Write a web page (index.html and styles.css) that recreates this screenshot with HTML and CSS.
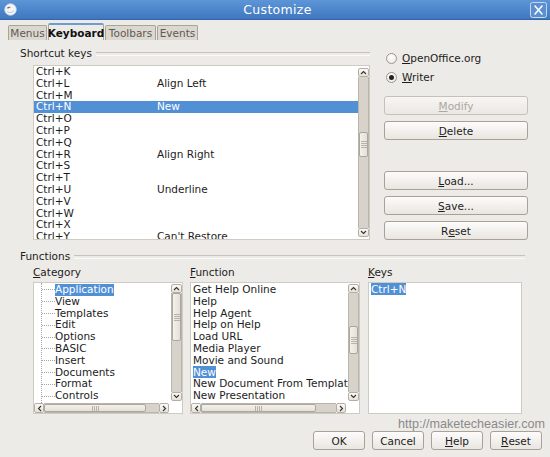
FILE: index.html
```html
<!DOCTYPE html>
<html>
<head>
<meta charset="utf-8">
<title>Customize</title>
<link rel="stylesheet" href="styles.css">
</head>
<body>
<div class="window">
  <div class="titlebar">
    <span class="app-icon">
      <svg width="13" height="13" viewBox="0 0 13 13"><circle cx="6.5" cy="6.5" r="5.8" fill="#f4f6f8" stroke="#c9d3de" stroke-width="0.8"/><path d="M2.6 5.2 C4 3.6 6.4 3.4 8 4.4 C6.6 4.2 5.2 4.6 4.6 5.6 Z" fill="#5b6470"/><path d="M3.2 8.6 C5 10 8 9.8 9.8 7.8" fill="none" stroke="#aab4c0" stroke-width="0.8"/></svg>
    </span>
    <span class="title">Customize</span>
    <span class="close">
      <svg width="17" height="16" viewBox="0 0 17 16"><rect x="0.5" y="0.5" width="16" height="15" rx="2" fill="#5a8fd0" stroke="#c7d8ee"/><path d="M5 4 L12 12 M12 4 L5 12" stroke="#ffffff" stroke-width="1.6" stroke-linecap="round"/></svg>
    </span>
  </div>

  <div class="tabs">
    <span class="tab t-menus">Menus</span>
    <span class="tab active t-keyboard">Keyboard</span>
    <span class="tab t-toolbars">Toolbars</span>
    <span class="tab t-events">Events</span>
  </div>

  <div class="page">
    <div class="top">
      <div class="shortcuts">
        <div class="group-head"><span class="group-label">Shortcut keys</span></div>
        <div class="listbox keylist">
          <div class="rows">
            <div class="row"><span class="k">Ctrl+K</span><span class="f"></span></div>
            <div class="row"><span class="k">Ctrl+L</span><span class="f">Align Left</span></div>
            <div class="row"><span class="k">Ctrl+M</span><span class="f"></span></div>
            <div class="row sel"><span class="k">Ctrl+N</span><span class="f">New</span></div>
            <div class="row"><span class="k">Ctrl+O</span><span class="f"></span></div>
            <div class="row"><span class="k">Ctrl+P</span><span class="f"></span></div>
            <div class="row"><span class="k">Ctrl+Q</span><span class="f"></span></div>
            <div class="row"><span class="k">Ctrl+R</span><span class="f">Align Right</span></div>
            <div class="row"><span class="k">Ctrl+S</span><span class="f"></span></div>
            <div class="row"><span class="k">Ctrl+T</span><span class="f"></span></div>
            <div class="row"><span class="k">Ctrl+U</span><span class="f">Underline</span></div>
            <div class="row"><span class="k">Ctrl+V</span><span class="f"></span></div>
            <div class="row"><span class="k">Ctrl+W</span><span class="f"></span></div>
            <div class="row"><span class="k">Ctrl+X</span><span class="f"></span></div>
            <div class="row"><span class="k">Ctrl+Y</span><span class="f">Can't Restore</span></div>
          </div>
          <div class="vscroll">
            <span class="sb-btn"><svg width="7" height="5" viewBox="0 0 7 5"><path d="M1 4 L3.5 1.5 L6 4" fill="none" stroke="#333" stroke-width="1.1"/></svg></span>
            <span class="sb-track"><span class="thumb v" style="margin-top:55px;height:25px"><i></i><i></i><i></i><i></i></span></span>
            <span class="sb-btn"><svg width="7" height="5" viewBox="0 0 7 5"><path d="M1 1 L3.5 3.5 L6 1" fill="none" stroke="#333" stroke-width="1.1"/></svg></span>
          </div>
        </div>
      </div>

      <div class="side">
        <label class="radio"><span class="rb"></span><span><u>O</u>penOffice.org</span></label>
        <label class="radio"><span class="rb on"></span><span><u>W</u>riter</span></label>
        <span class="btn disabled modify"><u>M</u>odify</span>
        <span class="btn"><u>D</u>elete</span>
        <span class="btn load"><u>L</u>oad...</span>
        <span class="btn"><u>S</u>ave...</span>
        <span class="btn">R<u>e</u>set</span>
      </div>
    </div>

    <div class="functions">
      <div class="group-head wide"><span class="group-label">Functions</span></div>
      <div class="cols">
        <div class="col cat">
          <div class="col-label"><u>C</u>ategory</div>
          <div class="listbox scrolled">
            <div class="rows tree">
              <div class="node"><span class="hl">Application</span></div>
              <div class="node"><span>View</span></div>
              <div class="node"><span>Templates</span></div>
              <div class="node"><span>Edit</span></div>
              <div class="node"><span>Options</span></div>
              <div class="node"><span>BASIC</span></div>
              <div class="node"><span>Insert</span></div>
              <div class="node"><span>Documents</span></div>
              <div class="node"><span>Format</span></div>
              <div class="node"><span>Controls</span></div>
            </div>
            <div class="vscroll">
              <span class="sb-btn"><svg width="7" height="5" viewBox="0 0 7 5"><path d="M1 4 L3.5 1.5 L6 4" fill="none" stroke="#333" stroke-width="1.1"/></svg></span>
              <span class="sb-track"><span class="thumb v" style="margin-top:0px;height:48px"><i></i><i></i><i></i><i></i></span></span>
              <span class="sb-btn"><svg width="7" height="5" viewBox="0 0 7 5"><path d="M1 1 L3.5 3.5 L6 1" fill="none" stroke="#333" stroke-width="1.1"/></svg></span>
            </div>
            <div class="hscroll">
              <span class="sb-btn h"><svg width="5" height="7" viewBox="0 0 5 7"><path d="M4 1 L1.5 3.5 L4 6" fill="none" stroke="#333" stroke-width="1.1"/></svg></span>
              <span class="sb-track h"><span class="thumb hz" style="width:102px"><i></i><i></i><i></i><i></i></span></span>
              <span class="sb-btn h"><svg width="5" height="7" viewBox="0 0 5 7"><path d="M1 1 L3.5 3.5 L1 6" fill="none" stroke="#333" stroke-width="1.1"/></svg></span>
            </div>
          </div>
        </div>

        <div class="col fn">
          <div class="col-label"><u>F</u>unction</div>
          <div class="listbox scrolled">
            <div class="rows plain">
              <div class="item">Get Help Online</div>
              <div class="item">Help</div>
              <div class="item">Help Agent</div>
              <div class="item">Help on Help</div>
              <div class="item">Load URL</div>
              <div class="item">Media Player</div>
              <div class="item">Movie and Sound</div>
              <div class="item"><span class="hl">New</span></div>
              <div class="item">New Document From Template</div>
              <div class="item">New Presentation</div>
            </div>
            <div class="vscroll">
              <span class="sb-btn"><svg width="7" height="5" viewBox="0 0 7 5"><path d="M1 4 L3.5 1.5 L6 4" fill="none" stroke="#333" stroke-width="1.1"/></svg></span>
              <span class="sb-track"><span class="thumb v" style="margin-top:33px;height:28px"><i></i><i></i><i></i><i></i></span></span>
              <span class="sb-btn"><svg width="7" height="5" viewBox="0 0 7 5"><path d="M1 1 L3.5 3.5 L6 1" fill="none" stroke="#333" stroke-width="1.1"/></svg></span>
            </div>
            <div class="hscroll">
              <span class="sb-btn h"><svg width="5" height="7" viewBox="0 0 5 7"><path d="M4 1 L1.5 3.5 L4 6" fill="none" stroke="#333" stroke-width="1.1"/></svg></span>
              <span class="sb-track h"><span class="thumb hz" style="width:115px"><i></i><i></i><i></i><i></i></span></span>
              <span class="sb-btn h"><svg width="5" height="7" viewBox="0 0 5 7"><path d="M1 1 L3.5 3.5 L1 6" fill="none" stroke="#333" stroke-width="1.1"/></svg></span>
            </div>
          </div>
        </div>

        <div class="col keys">
          <div class="col-label"><u>K</u>eys</div>
          <div class="listbox keysbox">
            <div class="item"><span class="hl">Ctrl+N</span></div>
          </div>
        </div>
      </div>
    </div>

    <div class="url">http://maketecheasier.com</div>

    <div class="actions">
      <span class="btn act">OK</span>
      <span class="btn act">Cancel</span>
      <span class="btn act"><u>H</u>elp</span>
      <span class="btn act"><u>R</u>eset</span>
    </div>
  </div>
</div>
</body>
</html>
```

FILE: styles.css
```css
* { box-sizing: border-box; }

html, body {
  margin: 0;
  padding: 0;
}

body {
  width: 550px;
  height: 457px;
  overflow: hidden;
  background: #edebe7;
  font-family: "DejaVu Sans", "Noto Sans", sans-serif;
  font-size: 10.5px;
  color: #1c1c1c;
}

u { text-decoration: underline; text-underline-offset: 1px; }

.window {
  width: 550px;
  height: 457px;
  display: flex;
  flex-direction: column;
}

/* title bar */
.titlebar {
  height: 20px;
  display: flex;
  align-items: center;
  background: linear-gradient(#5d95d7, #3f78c0);
  border-bottom: 1px solid #3466a6;
  padding: 0 3px 0 4px;
}
.app-icon { display: flex; width: 13px; height: 13px; }
.title {
  flex: 1;
  text-align: center;
  color: #ffffff;
  font-size: 12.5px;
  letter-spacing: 0.3px;
  padding-left: 8px;
}
.close { display: flex; width: 17px; height: 16px; }

/* tabs */
.tabs {
  height: 20px;
  display: flex;
  align-items: flex-end;
  padding-left: 8px;
}
.tab {
  height: 15px;
  display: flex;
  align-items: center;
  justify-content: center;
  background: #dcd8d0;
  border: 1px solid #aaa397;
  border-bottom: none;
  border-radius: 2px 2px 0 0;
  color: #5e5a55;
  font-size: 10.5px;
  margin-right: 1px;
}
.tab.active {
  height: 17px;
  background: #edebe7;
  color: #111;
  font-weight: bold;
  border-top: 2px solid #6f9bd0;
}
.t-menus { width: 39px; }
.t-keyboard { width: 56px; }
.t-toolbars { width: 51px; }
.t-events { width: 41px; }

/* page */
.page {
  flex: 1;
  display: flex;
  flex-direction: column;
  padding: 6px 5px 0 20px;
}

.top { display: flex; }

.shortcuts {
  width: 350px;
  display: flex;
  flex-direction: column;
}

.group-head {
  height: 14px;
  display: flex;
  align-items: center;
}
.group-label { padding-right: 4px; }
.group-head::after {
  content: "";
  flex: 1;
  height: 2px;
  border-top: 1px solid #c8c3ba;
  border-bottom: 1px solid #fbfaf8;
  margin-top: 1px;
}
.group-head.wide { width: 505px; }

/* list boxes */
.listbox {
  background: #ffffff;
  border: 1px solid #cfcac2;
}
.keylist {
  margin: 5px 0 0 13px;
  width: 337px;
  height: 175px;
  display: flex;
  overflow: hidden;
}
.keylist .rows { flex: 1; overflow: hidden; }
.row {
  height: 11.8px;
  line-height: 11.8px;
  display: flex;
  white-space: nowrap;
}
.row .k { width: 123px; padding-left: 2px; }
.row .f { flex: 1; }
.row.sel { background: #5290d6; color: #ffffff; }

/* scrollbars */
.vscroll {
  width: 11px;
  display: flex;
  flex-direction: column;
  padding: 2px 0;
  background: #ffffff;
}
.sb-btn {
  height: 9px;
  display: flex;
  align-items: center;
  justify-content: center;
  background: linear-gradient(#fbfaf8, #e6e2dc);
  border: 1px solid #b5aea3;
  border-radius: 2px;
}
.sb-btn.h { height: auto; width: 10px; }
.sb-track {
  flex: 1;
  display: flex;
  flex-direction: column;
  background: #d7d2ca;
  border-left: 1px solid #bbb4a9;
  border-right: 1px solid #bbb4a9;
}
.sb-track.h {
  flex-direction: row;
  border: none;
  border-top: 1px solid #bbb4a9;
  border-bottom: 1px solid #bbb4a9;
}
.thumb {
  display: flex;
  align-items: center;
  justify-content: center;
  background: linear-gradient(90deg, #f3f1ee, #e4e0da);
  border: 1px solid #ada69b;
  border-radius: 2px;
}
.thumb.v { flex-direction: column; gap: 1px; }
.thumb.v i { display: block; width: 6px; height: 1px; background: #b9b2a7; }
.thumb.hz { background: linear-gradient(#f3f1ee, #e4e0da); gap: 1px; }
.thumb.hz i { display: block; width: 1px; height: 5px; background: #b9b2a7; }

/* side */
.side {
  margin-left: 14px;
  width: 144px;
  padding-top: 3px;
  display: flex;
  flex-direction: column;
}
.radio {
  height: 18px;
  display: flex;
  align-items: center;
  gap: 5px;
  padding-left: 2px;
  margin-bottom: 1px;
}
.rb {
  width: 11px;
  height: 11px;
  border-radius: 50%;
  border: 1px solid #9d968b;
  background: radial-gradient(circle at 50% 35%, #ffffff, #ebe8e3);
  display: flex;
  align-items: center;
  justify-content: center;
}
.rb.on::after {
  content: "";
  width: 5px;
  height: 5px;
  border-radius: 50%;
  background: #222;
}
.btn {
  height: 19px;
  display: flex;
  align-items: center;
  justify-content: center;
  background: linear-gradient(#fdfcfb, #e9e6e1);
  border: 1px solid #a8a196;
  border-radius: 3px;
  margin-top: 6px;
  color: #1c1c1c;
}
.btn.modify { margin-top: 9px; }
.btn.load { margin-top: 31px; }
.btn.disabled { color: #aca79f; border-color: #c6c0b6; background: linear-gradient(#f7f6f4, #ebe8e4); }

/* functions */
.functions { margin-top: 9px; }
.cols {
  display: flex;
  margin: 2px 0 0 13px;
}
.col { display: flex; flex-direction: column; }
.col-label { height: 14px; line-height: 14px; }
.cat { width: 150px; }
.fn { width: 170px; margin-left: 7px; }
.keys { width: 154px; margin-left: 8px; }

.listbox.scrolled {
  margin-top: 3px;
  height: 132px;
  display: grid;
  grid-template-columns: 1fr 11px;
  grid-template-rows: 1fr 10px;
  overflow: hidden;
}
.scrolled .rows { overflow: hidden; padding-top: 1px; white-space: nowrap; }
.scrolled .vscroll { padding: 1px 0 2px; }
.hscroll {
  grid-column: 1 / 2;
  display: flex;
  height: 10px;
  padding-right: 2px;
}
.hscroll .sb-track.h { justify-content: flex-start; }

.tree {
  margin-left: 7px;
  border-left: 1px dotted #a5a5a5;
}
.node {
  height: 11.8px;
  line-height: 11.8px;
  display: flex;
  align-items: center;
}
.node::before {
  content: "";
  width: 13px;
  border-top: 1px dotted #a5a5a5;
}
.hl { background: #5290d6; color: #ffffff; }
.plain .item { height: 11.8px; line-height: 11.8px; padding-left: 2px; }

.keysbox {
  margin-top: 3px;
  height: 132px;
  padding-top: 1px;
}
.keysbox .item { height: 11.8px; line-height: 11.8px; padding-left: 2px; }

/* footer */
.url {
  margin-top: 3px;
  height: 14px;
  line-height: 14px;
  text-align: right;
  font-family: "Liberation Sans", Arial, sans-serif;
  font-size: 12.6px;
  color: #8a8a8a;
}
.actions {
  display: flex;
  justify-content: flex-end;
  gap: 7px;
  margin-right: 3px;
}
.btn.act { width: 52px; margin-top: 0; }
```
